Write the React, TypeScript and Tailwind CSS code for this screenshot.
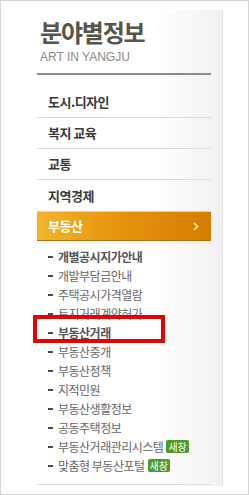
import React from 'react';

const MAIN_MENU = ['도시.디자인', '복지 교육', '교통', '지역경제'];

const SUB_MENU = [
  { label: '개별공시지가안내', bold: true },
  { label: '개발부담금안내' },
  { label: '주택공시가격열람' },
  { label: '토지거래계약허가' },
  { label: '부동산거래', bold: true },
  { label: '부동산중개' },
  { label: '부동산정책' },
  { label: '지적민원' },
  { label: '부동산생활정보' },
  { label: '공동주택정보' },
  { label: '부동산거래관리시스템', badge: true },
  { label: '맞춤형 부동산포털', badge: true },
];

const font = { fontFamily: '"Noto Sans CJK KR", "Noto Sans", sans-serif' };

export default function App() {
  return (
    <div className="w-[249px] h-[495px] border border-[#d6d6d6] bg-white" style={font}>
      <div className="relative mt-[9px] h-[476px] w-[222px] border-r border-[#e3e3e3] bg-[linear-gradient(to_right,#ffffff_70%,#f1f1f1)] pl-[36px]">
        <div className="w-[174px]">
          <h1 className="pt-[8px] pl-[3px] text-[24px] leading-[27px] font-bold tracking-[-1.2px] text-[#55554a]">분야별정보</h1>
          <p className="mt-[5px] pl-[3px] text-[12px] leading-[14px] text-[#8a8a8a]" style={{ fontFamily: '"Liberation Sans", Arial, sans-serif' }}>
            ART IN YANGJU
          </p>
          <div className="mt-[9px] h-[2px] bg-[#8d8d82]" />

          <ul className="mt-[12px]">
            {MAIN_MENU.map((item, i) => (
              <li
                key={item}
                className={
                  'h-[31px] flex items-center pl-[11px] text-[13px] font-bold tracking-[-0.5px] text-[#3a3a3a] ' +
                  (i < MAIN_MENU.length - 1 ? 'border-b border-[#dcdcdc]' : '')
                }
              >
                {item}
              </li>
            ))}
          </ul>

          <div className="h-[30px] flex items-center justify-between pl-[11px] pr-[12px] bg-[linear-gradient(to_right,#f1b52c,#e6950f_45%,#d67d00)] shadow-[inset_0_1px_0_#f8d27a,inset_0_-1px_0_#b86a00]">
            <span className="text-[13px] font-bold text-white tracking-[-0.5px]">부동산</span>
            <svg width="6" height="9" viewBox="0 0 6 9" className="mt-[1px]">
              <path d="M1 1 L4.5 4.5 L1 8" fill="none" stroke="#ffe9a8" strokeWidth="1.6" />
            </svg>
          </div>

          <ul className="mt-[6px] pb-[9px] border-b border-[#dcdcdc]">
            {SUB_MENU.map((item) => (
              <li key={item.label} className="h-[19px] flex items-center pl-[11px]">
                <span className="w-[5px] h-[2px] bg-[#4a4a4a] mr-[5px] shrink-0" />
                <span
                  className={
                    'text-[12px] tracking-[-0.5px] whitespace-nowrap ' +
                    (item.bold ? 'font-bold text-[#555555]' : 'text-[#666666]')
                  }
                >
                  {item.label}
                </span>
                {item.badge && (
                  <span className="ml-[3px] h-[13px] px-[2px] flex items-center rounded-[2px] bg-[#4c9a2c] text-[10px] leading-none text-white">
                    새창
                  </span>
                )}
              </li>
            ))}
          </ul>
        </div>

        <div className="absolute left-[32px] top-[305px] w-[132px] h-[28px] border-[4px] border-[#e60000]" />
      </div>
    </div>
  );
}
